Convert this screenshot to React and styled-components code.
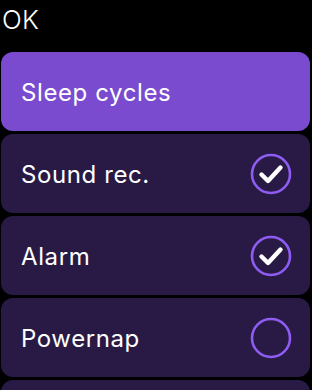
import React from "react";
import styled, { createGlobalStyle } from "styled-components";

const Global = createGlobalStyle`
  html, body { margin: 0; padding: 0; background: #000; }
  body { font-family: Inter, "Noto Sans", sans-serif; color: #fff; overflow: hidden; }
`;

const Screen = styled.div`
  width: 312px;
  height: 390px;
  overflow: hidden;
  background: #000;
  display: flex;
  flex-direction: column;
`;

const Header = styled.div`
  flex: none;
  height: 52px;
  padding: 4px 0 0 2px;
  box-sizing: border-box;
  font-size: 26px;
  font-weight: 300;
  line-height: 32px;
  letter-spacing: 0.2px;
`;

const List = styled.div`
  flex: none;
  display: flex;
  flex-direction: column;
  gap: 3px;
  padding: 0 2px 0 1px;
`;

const Row = styled.div`
  flex: none;
  height: 79px;
  border-radius: 12px;
  background: ${(p) => (p.$active ? "#7A4BCF" : "#281A44")};
  display: flex;
  align-items: center;
  justify-content: space-between;
  padding: 1px 18px 0 20px;
  box-sizing: border-box;
`;

const Label = styled.span`
  font-size: 24px;
  font-weight: 400;
  letter-spacing: 0.6px;
`;

const CheckIcon = ({ checked }) => (
  <svg width="42" height="42" viewBox="0 0 42 42">
    <circle cx="21" cy="21" r="19" fill="none" stroke="#8D5CF2" strokeWidth="2.6" />
    {checked && (
      <path
        d="M11.5 21.5 L18 28 L30.5 14.5"
        fill="none"
        stroke="#fff"
        strokeWidth="4.4"
        strokeLinecap="round"
        strokeLinejoin="round"
      />
    )}
  </svg>
);

const items = [
  { label: "Sleep cycles", active: true },
  { label: "Sound rec.", check: true, checked: true },
  { label: "Alarm", check: true, checked: true },
  { label: "Powernap", check: true, checked: false },
  { label: "", check: false },
];

export default function App() {
  return (
    <Screen>
      <Global />
      <Header>OK</Header>
      <List>
        {items.map((it, i) => (
          <Row key={i} $active={it.active}>
            <Label>{it.label}</Label>
            {it.check && <CheckIcon checked={it.checked} />}
          </Row>
        ))}
      </List>
    </Screen>
  );
}
